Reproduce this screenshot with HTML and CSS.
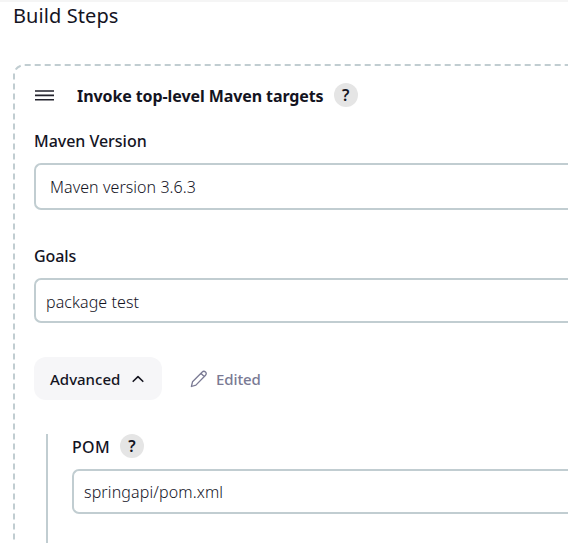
FILE: index.html
```html
<!DOCTYPE html>
<html lang="en">
<head>
<meta charset="utf-8">
<title>Build Steps</title>
<link rel="stylesheet" href="styles.css">
</head>
<body>
<main class="page">
  <h2 class="section-title"><span class="t-build">Build Steps</span></h2>
  <section class="step">
    <svg class="outline" width="555" height="479" viewBox="0 0 555 479" fill="none" stroke="#c1cdd1" stroke-width="2">
      <path d="M11.700 1H555M1 9.400V479" stroke-dasharray="6 4"/>
      <path d="M2.700 5.600Q4.300 3 7.700 1.700"/>
    </svg>
    <header class="step-header">
      <svg class="handle" width="19" height="12" viewBox="0 0 19 12"><path d="M0 2h19M0 6.400h19M0 10.800h19" stroke="#22222c" stroke-width="1.6"/></svg>
      <span class="step-name">Invoke top-level Maven targets</span>
      <span class="help">?</span>
    </header>
    <label class="label l-version"><span>Maven Version</span></label>
    <div class="field select"><span class="t-version">Maven version 3.6.3</span></div>
    <label class="label l-goals"><span>Goals</span></label>
    <div class="field"><span class="t-goals">package test</span></div>
    <div class="actions">
      <button class="advanced"><span>Advanced</span>
        <svg width="12" height="8" viewBox="0 0 12 8"><path d="M1.2 6.300L6 1.600l4.800 4.700" fill="none" stroke="#14141f" stroke-width="1.6" stroke-linecap="round" stroke-linejoin="round"/></svg>
      </button>
      <span class="edited">
        <svg width="18" height="18" viewBox="0 0 18 18" fill="none" stroke="#7a7a94" stroke-width="1.3" stroke-linejoin="round"><path d="M1.4 16.5l1.100-4.700L12 2.200c1.200-1.100 2.500-1.100 3.500-.2 1 1 .9 2.300-.2 3.500L5.900 15.100zM10.900 3.300l3.500 3.400"/></svg>
        <span>Edited</span>
      </span>
    </div>
    <div class="nested">
      <div class="label l-pom"><span class="t-label">POM</span><span class="help">?</span></div>
      <div class="field"><span class="t-pom">springapi/pom.xml</span></div>
    </div>
  </section>
</main>
</body>
</html>
```
FILE: styles.css
```css
* { box-sizing: border-box; }
body {
  margin: 0;
  height: 543px;
  overflow: hidden;
  background: #fff;
  color: #14141f;
  font: 500 16px/24px "Noto Sans", "Open Sans", sans-serif;
}
.page {
  height: 543px;
  overflow: hidden;
  border-top: 2px solid #f5f5f5;
  padding-left: 13px;
}
.section-title { margin: 0; height: 62px; font-size: 20px; line-height: 28px; font-weight: 400; }
.t-build { letter-spacing: .08px; }
.step {
  position: relative;
  height: 479px;
  padding: 19px 0 0 21px;
}
.outline { position: absolute; left: 0; top: 0; }
.step-header { display: flex; align-items: center; height: 24px; font-weight: 700; }
.step-name { letter-spacing: -.09px; padding-top: 2px; }
.handle { margin: 0 23px 0 1px; }
.help {
  width: 24px;
  height: 24px;
  border-radius: 50%;
  background: #e5e5e5;
  text-align: center;
  font-weight: 600;
  font-size: 16px;
  line-height: 25px;
  margin-left: 10px;
}
.label { display: flex; align-items: center; height: 24px; }
.l-version { margin: 22px 0 10px; letter-spacing: -.03px; }
.l-goals { margin: 34px 0 10px; letter-spacing: -.1px; }
.field {
  display: flex;
  align-items: center;
  height: 45px;
  padding-left: 10px;
  border: 2px solid #c1cdd1;
  border-right: 0;
  border-radius: 7px 0 0 7px;
  font-weight: 300;
}
.select { height: 47px; padding-left: 14px; }
.t-version { letter-spacing: .06px; }
.t-goals { letter-spacing: .08px; padding-top: 2px; }
.t-pom { letter-spacing: .13px; }
.actions { display: flex; margin-top: 34px; height: 43px; align-items: center; font-size: 15px; }
.advanced {
  display: flex;
  align-items: center;
  justify-content: space-between;
  width: 128px;
  height: 43px;
  padding: 0 18px 0 16px;
  border: 0;
  border-radius: 12px;
  background: #f6f6f8;
  color: inherit;
  font: inherit;
}
.edited { display: flex; align-items: center; gap: 8px; margin-left: 28px; color: #7a7a94; letter-spacing: -.1px; }
.nested { margin: 34px 0 0 12px; height: 109px; border-left: 2px solid #c1cdd1; padding-left: 24px; }
.l-pom { margin-bottom: 11px; }
.t-label { padding-top: 2px; letter-spacing: .35px; }
```
